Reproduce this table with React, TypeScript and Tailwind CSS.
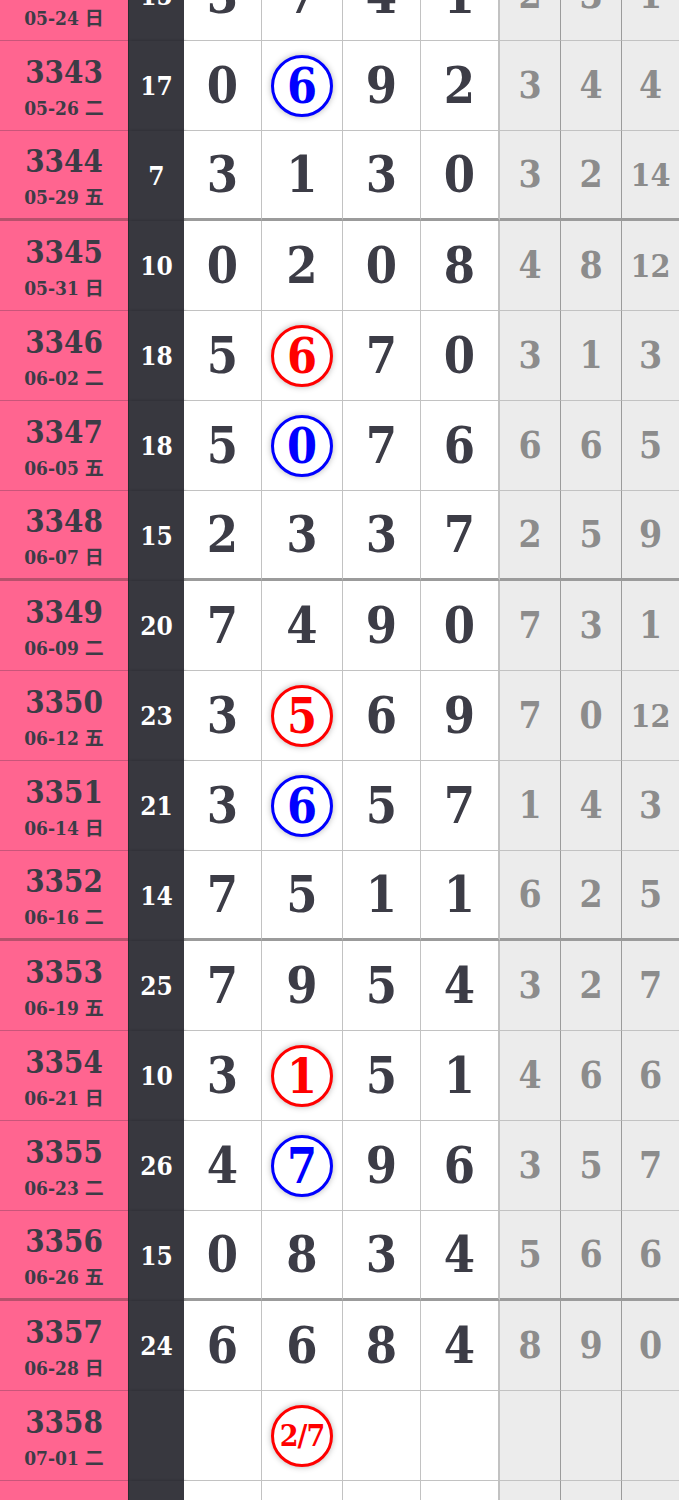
import React from "react";

type Mark = { v: string; c: "red" | "blue" } | null;

type Row = {
  no: string;
  date: string;
  sum: string;
  d: string[];
  mark: Mark;
  markAt: number;
  g: string[];
  end?: boolean;
};

const rows: Row[] = [
  { no: "3342", date: "05-24 日", sum: "15", d: ["3", "7", "4", "1"], mark: null, markAt: -1, g: ["2", "3", "1"] },
  { no: "3343", date: "05-26 二", sum: "17", d: ["0", "6", "9", "2"], mark: { v: "6", c: "blue" }, markAt: 1, g: ["3", "4", "4"] },
  { no: "3344", date: "05-29 五", sum: "7", d: ["3", "1", "3", "0"], mark: null, markAt: -1, g: ["3", "2", "14"], end: true },
  { no: "3345", date: "05-31 日", sum: "10", d: ["0", "2", "0", "8"], mark: null, markAt: -1, g: ["4", "8", "12"] },
  { no: "3346", date: "06-02 二", sum: "18", d: ["5", "6", "7", "0"], mark: { v: "6", c: "red" }, markAt: 1, g: ["3", "1", "3"] },
  { no: "3347", date: "06-05 五", sum: "18", d: ["5", "0", "7", "6"], mark: { v: "0", c: "blue" }, markAt: 1, g: ["6", "6", "5"] },
  { no: "3348", date: "06-07 日", sum: "15", d: ["2", "3", "3", "7"], mark: null, markAt: -1, g: ["2", "5", "9"], end: true },
  { no: "3349", date: "06-09 二", sum: "20", d: ["7", "4", "9", "0"], mark: null, markAt: -1, g: ["7", "3", "1"] },
  { no: "3350", date: "06-12 五", sum: "23", d: ["3", "5", "6", "9"], mark: { v: "5", c: "red" }, markAt: 1, g: ["7", "0", "12"] },
  { no: "3351", date: "06-14 日", sum: "21", d: ["3", "6", "5", "7"], mark: { v: "6", c: "blue" }, markAt: 1, g: ["1", "4", "3"] },
  { no: "3352", date: "06-16 二", sum: "14", d: ["7", "5", "1", "1"], mark: null, markAt: -1, g: ["6", "2", "5"], end: true },
  { no: "3353", date: "06-19 五", sum: "25", d: ["7", "9", "5", "4"], mark: null, markAt: -1, g: ["3", "2", "7"] },
  { no: "3354", date: "06-21 日", sum: "10", d: ["3", "1", "5", "1"], mark: { v: "1", c: "red" }, markAt: 1, g: ["4", "6", "6"] },
  { no: "3355", date: "06-23 二", sum: "26", d: ["4", "7", "9", "6"], mark: { v: "7", c: "blue" }, markAt: 1, g: ["3", "5", "7"] },
  { no: "3356", date: "06-26 五", sum: "15", d: ["0", "8", "3", "4"], mark: null, markAt: -1, g: ["5", "6", "6"], end: true },
  { no: "3357", date: "06-28 日", sum: "24", d: ["6", "6", "8", "4"], mark: null, markAt: -1, g: ["8", "9", "0"] },
  { no: "3358", date: "07-01 二", sum: "", d: ["", "2/7", "", ""], mark: { v: "2/7", c: "red" }, markAt: 1, g: ["", "", ""] },
  { no: "3359", date: "07-03 五", sum: "", d: ["", "", "", ""], mark: null, markAt: -1, g: ["", "", ""] },
];

const digitW = ["w-[78px]", "w-[81px]", "w-[78px]", "w-[79px] border-r-2 border-r-[#9b9b9b]"];
const grayW = ["w-[61px]", "w-[61px]", "flex-1 border-r-0"];

function Circle({ v, c }: { v: string; c: "red" | "blue" }) {
  const color = c === "red" ? "border-[#ff0000] text-[#ff0000]" : "border-[#0000ff] text-[#0000ff]";
  const size = v.length > 1 ? "text-[30px] tracking-[-1px]" : "text-[48px]";
  return (
    <div
      className={`flex h-[62px] w-[62px] items-center justify-center rounded-full border-[3px] bg-white shadow-[0_0_6px_rgba(0,0,0,0.3)] ${color} ${size}`}
    >
      {v}
    </div>
  );
}

export default function App() {
  return (
    <div className="min-h-screen overflow-hidden bg-white font-['DejaVu_Serif','Noto_Sans_CJK_SC',serif] font-stretch-condensed font-bold text-[#3c3c46]">
      <div className="mt-[-49px]">
        {rows.map((r) => {
          const line = r.end ? "border-b-[3px] border-b-[#9b9b9b]" : "border-b border-b-[#c2c2c2]";
          return (
            <div key={r.no} className="flex h-[90px]">
              <div
                className={`flex w-[128px] flex-col items-center justify-center bg-[#ff6590] ${
                  r.end ? "border-b-[3px] border-b-[#b8506c]" : "border-b border-b-[#c9557a]"
                }`}
              >
                <span className="text-[31px] leading-[38px]">{r.no}</span>
                <span className="mt-[6px] text-[19px] leading-[22px]">{r.date}</span>
              </div>
              <div className="flex w-[56px] items-center justify-center border-l border-l-[#2a2a30] bg-[#38383f] text-[26px] text-white shadow-[2px_0_3px_rgba(0,0,0,0.25)]">
                {r.sum}
              </div>
              {r.d.map((v, i) => (
                <div
                  key={i}
                  className={`flex items-center justify-center border-r border-r-[#c2c2c2] bg-white text-[50px] ${digitW[i]} ${line}`}
                >
                  {r.mark && r.markAt === i ? <Circle v={r.mark.v} c={r.mark.c} /> : v}
                </div>
              ))}
              {r.g.map((v, i) => (
                <div
                  key={i}
                  className={`flex items-center justify-center border-r border-r-[#9b9b9b] bg-[#ececec] text-[#8c8c8c] ${
                    v.length > 1 ? "text-[32px]" : "text-[37px]"
                  } ${grayW[i]} ${line}`}
                >
                  {v}
                </div>
              ))}
            </div>
          );
        })}
      </div>
    </div>
  );
}
